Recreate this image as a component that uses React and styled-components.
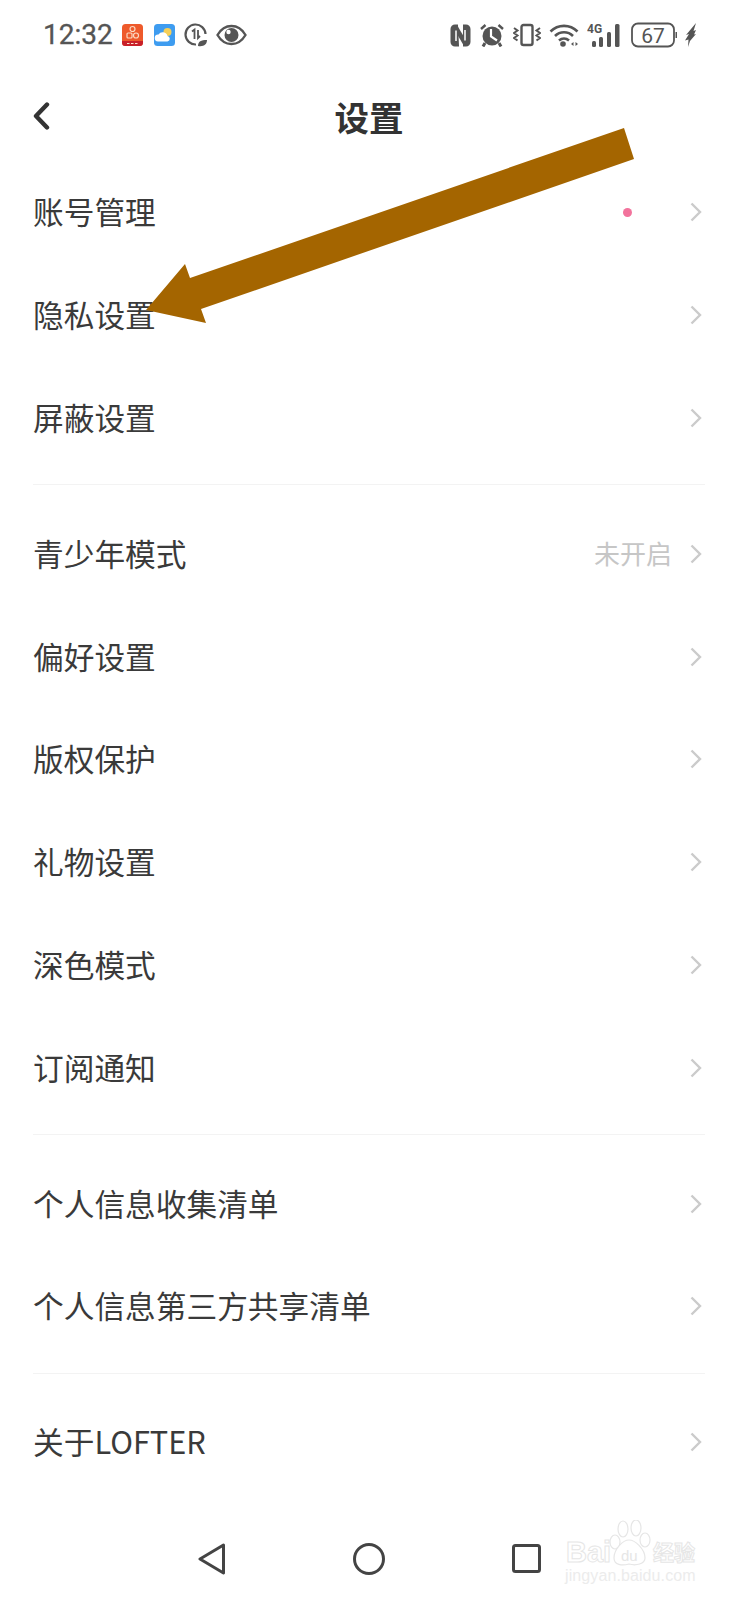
import React from "react";
import styled, { createGlobalStyle } from "styled-components";

const Global = createGlobalStyle`
  html, body { margin: 0; padding: 0; background: #fff; }
  * { box-sizing: border-box; }
`;

const Page = styled.div`
  position: relative;
  width: 738px;
  height: 1600px;
  overflow: hidden;
  background: #fff;
  color: #333;
  font-family: "Noto Sans CJK SC", "Noto Sans", sans-serif;
`;

const StatusBar = styled.div`
  height: 70px;
  padding: 0 42px 0 43px;
  display: flex;
  align-items: center;
  justify-content: space-between;
`;

const StatusGroup = styled.div`
  display: flex;
  align-items: center;
  gap: ${(p) => p.$gap}px;
`;

const Time = styled.span`
  font-family: Roboto, sans-serif;
  font-size: 28px;
  color: #555;
  line-height: 1;
  -webkit-text-stroke: 0.3px #555;
`;

const Header = styled.div`
  height: 91px;
  padding-left: 33px;
  display: flex;
  align-items: center;
  position: relative;
`;

const Title = styled.h1`
  position: absolute;
  left: 0;
  right: 0;
  margin: 0;
  text-align: center;
  font-size: 34.5px;
  font-weight: 700;
  color: #333;
`;

const Group = styled.div`
  padding: ${(p) => (p.$first ? 0 : 17)}px 0 15px;
  margin: 0 33px;
  border-bottom: ${(p) => (p.$last ? "none" : "1px solid #f3f3f3")};
`;

const Row = styled.div`
  height: 102.8px;
  display: flex;
  align-items: center;
`;

const Label = styled.span`
  flex: 1;
  font-size: 30.7px;
  font-weight: 400;
  color: #3a3a3a;
  padding-bottom: 3px;
`;

const Value = styled.span`
  font-size: 26px;
  color: #c6c6c6;
  margin-right: 18px;
  padding-bottom: 3px;
`;

const Dot = styled.span`
  width: 9px;
  height: 9px;
  border-radius: 50%;
  background: #f2739c;
  margin-right: 58px;
`;

const NavBar = styled.div`
  height: 100px;
  display: flex;
  align-items: center;
  justify-content: center;
  gap: 127px;
`;

const Arrow = styled.svg`
  position: absolute;
  left: 0;
  top: 0;
`;

const Watermark = styled.div`
  position: absolute;
  left: 564px;
  top: 1520px;
  width: 134px;
  height: 62px;
  color: #fff;
  font-family: "Liberation Sans", sans-serif;
`;

const MarkBai = styled.span`
  position: absolute;
  left: 2px;
  top: 18px;
  font-size: 29px;
  line-height: 1;
  font-weight: 700;
  -webkit-text-stroke: 1px #e6e6e6;
`;

const MarkDu = styled.span`
  position: absolute;
  left: 57px;
  top: 28px;
  font-size: 15px;
  line-height: 1;
  color: #e6e6e6;
`;

const MarkCn = styled.span`
  position: absolute;
  left: 89px;
  top: 21px;
  font-family: "Noto Sans CJK SC", sans-serif;
  font-size: 21px;
  line-height: 1;
  font-weight: 700;
  -webkit-text-stroke: 1px #e6e6e6;
`;

const MarkUrl = styled.span`
  position: absolute;
  left: 1px;
  top: 48px;
  font-size: 16px;
  line-height: 1;
  letter-spacing: 0.1px;
  color: #ececec;
`;

const RowChevron = styled.svg`
  margin-right: 3px;
`;

const Chevron = () => (
  <RowChevron width="12" height="20" viewBox="0 0 12 20" fill="none">
    <path d="M1.500 1.500 10 10 1.500 18.500" stroke="#cbcbcb" strokeWidth="2.400" />
  </RowChevron>
);

const BackIcon = () => (
  <svg width="17" height="28" viewBox="0 0 17 28" fill="none">
    <path d="M14 2.500 3 14l11 11.500" stroke="#333" strokeWidth="4.400" strokeLinecap="round" strokeLinejoin="round" />
  </svg>
);

const AppIcon = () => (
  <svg width="21" height="22" viewBox="0 0 21 22">
    <rect width="21" height="22" rx="3.500" fill="#ee5a2b" />
    <path d="M0 17h21v1.500a3.500 3.500 0 0 1-3.500 3.500h-14A3.500 3.500 0 0 1 0 18.500z" fill="#c8202a" />
    <g fill="none" stroke="#fbd9c2" strokeWidth="1.200">
      <circle cx="10.500" cy="5" r="2.500" />
      <rect x="5" y="9" width="5" height="5" rx="1" />
      <circle cx="14" cy="11.500" r="2.500" />
    </g>
    <path d="M5 19.500h11" stroke="#fbe3d0" strokeWidth="1.200" strokeDasharray="2.500 1.500" />
  </svg>
);

const WeatherIcon = () => (
  <svg width="23" height="22" viewBox="0 0 23 22">
    <rect x="2" width="21" height="22" rx="3.500" fill="#3e9cf0" />
    <circle cx="15.500" cy="8" r="4" fill="#f5cf58" />
    <path d="M6 17.500a3.500 3.500 0 0 1 .5-7 5 5 0 0 1 9 1.500 2.800 2.800 0 0 1 0 5.500z" fill="#fff" />
  </svg>
);

const LeafIcon = () => (
  <svg width="23" height="24" viewBox="0 0 23 24" fill="none">
    <path d="M12 21.500A10 10 0 1 1 21.500 11" stroke="#555" strokeWidth="2.200" />
    <path d="M8 8.500 10.500 6.500V16M14 7v8l2-2" stroke="#555" strokeWidth="1.800" />
    <path d="M14 23c0-4.500 3-6 9-6 0 4.500-3.500 7-9 6z" fill="#555" />
  </svg>
);

const EyeIcon = () => (
  <svg width="31" height="22" viewBox="0 0 31 22" fill="none">
    <path d="M1.500 11C5 5 10 2 15.500 2S26 5 29.500 11C26 17 21 20 15.500 20S5 17 1.500 11z" stroke="#555" strokeWidth="2.400" />
    <circle cx="15.500" cy="11" r="7" fill="#555" />
    <circle cx="12.500" cy="8" r="2.200" fill="#fff" />
  </svg>
);

const NfcIcon = () => (
  <svg width="21" height="23" viewBox="0 0 21 23" fill="none">
    <path d="M7 1.500H5A3.500 3.500 0 0 0 1.500 5v13A3.500 3.500 0 0 0 5 21.500h3zM14 1.500h2A3.500 3.500 0 0 1 19.500 5v13a3.500 3.500 0 0 1-3.500 3.500h-2z" fill="#555" stroke="#555" strokeWidth="2" />
    <path d="M5.500 3 15.500 20" stroke="#555" strokeWidth="4.500" />
    <path d="M6 6.500v10.500M15 6v10.500" stroke="#fff" strokeWidth="1.500" />
  </svg>
);

const AlarmIcon = () => (
  <svg width="26" height="24" viewBox="0 0 26 24" fill="none">
    <circle cx="13" cy="13" r="9.500" fill="#555" />
    <path d="M12 6v7.500l6 4" stroke="#fff" strokeWidth="2.200" />
    <path d="M2 6 6.500 2M24 6 19.500 2" stroke="#555" strokeWidth="2.400" />
    <path d="M6 20l-2 3.500M20 20l2 3.500" stroke="#555" strokeWidth="3" />
  </svg>
);

const VibrateIcon = () => (
  <svg width="28" height="24" viewBox="0 0 28 24" fill="none">
    <rect x="8.500" y="2" width="11" height="20" rx="2" stroke="#555" strokeWidth="2.400" />
    <path d="M1 5l3.500 2.500L1 10l3.500 2.500L1 15l3.500 2.500M27 5l-3.500 2.500L27 10l-3.500 2.500L27 15l-3.500 2.500" stroke="#555" strokeWidth="2" />
  </svg>
);

const WifiIcon = () => (
  <svg width="30" height="24" viewBox="0 0 30 24" fill="none">
    <path d="M1.500 8.500C9 1 21 1 28.500 8.500M6 13c5-5 13-5 18 0M10 17.500c3-2.500 7-2.500 10 0" stroke="#555" strokeWidth="2.600" />
    <circle cx="14" cy="21" r="2.800" fill="#555" />
    <path d="M22 21l2.500-2v4zM29 21l-2.500-2v4z" fill="#555" />
  </svg>
);

const SignalIcon = () => (
  <svg width="34" height="24" viewBox="0 0 34 24" fill="#555">
    <text x="0" y="10" fontFamily="Roboto, sans-serif" fontSize="12" fontWeight="700">4G</text>
    <rect x="5" y="18" width="4" height="6" rx="1.500" />
    <rect x="12" y="14" width="4" height="10" rx="1.500" />
    <rect x="20" y="9" width="4" height="15" rx="1.500" />
    <rect x="28" y="1" width="4.500" height="23" rx="1.500" />
  </svg>
);

const BatteryIcon = () => (
  <svg width="48" height="26" viewBox="0 0 48 26" fill="none">
    <rect x="3" y="1.500" width="42" height="23" rx="6" stroke="#555" strokeWidth="1.800" />
    <rect x="46.500" y="10" width="1.500" height="6" fill="#555" />
    <text x="24" y="21" textAnchor="middle" fontFamily="Roboto, sans-serif" fontSize="21" fill="#555">67</text>
  </svg>
);

const BoltIcon = () => (
  <svg width="11" height="24" viewBox="0 0 11 24">
    <path d="M11 0 8.500 8l2.500-1-2 4.500 2-.5-6 7L3 24l.5-7.500-3.500 1L4 11l-3 1z" fill="#555" />
  </svg>
);

const NavBack = () => (
  <svg width="28" height="32" viewBox="0 0 28 32" fill="none">
    <path d="M25.500 2 2 16l23.500 14z" stroke="#444" strokeWidth="3" strokeLinejoin="round" />
  </svg>
);

const NavHome = () => (
  <svg width="32" height="32" viewBox="0 0 32 32" fill="none">
    <circle cx="16" cy="16" r="14.500" stroke="#444" strokeWidth="3" />
  </svg>
);

const NavRecent = () => (
  <svg width="29" height="29" viewBox="0 0 29 29" fill="none">
    <rect x="1.500" y="1.500" width="26" height="26" rx="2" stroke="#444" strokeWidth="3" />
  </svg>
);

const PawMark = styled.svg`
  position: absolute;
  left: 44px;
  top: 0;
`;

const Paw = () => (
  <PawMark width="44" height="48" viewBox="0 0 44 48" fill="#fff" stroke="#e6e6e6" strokeWidth="1.200">
    <ellipse cx="15" cy="9" rx="5" ry="8" />
    <ellipse cx="28" cy="8" rx="5" ry="8" />
    <ellipse cx="7" cy="22" rx="5" ry="7" />
    <ellipse cx="37" cy="20" rx="5" ry="7" />
    <path d="M6 38c0-9 9-18 15-18s16 9 16 18c0 6-9 8-16 6-7 2-15 1-15-6z" />
  </PawMark>
);

const groups = [
  [{ label: "账号管理", dot: true }, { label: "隐私设置" }, { label: "屏蔽设置" }],
  [
    { label: "青少年模式", value: "未开启" },
    { label: "偏好设置" },
    { label: "版权保护" },
    { label: "礼物设置" },
    { label: "深色模式" },
    { label: "订阅通知" },
  ],
  [{ label: "个人信息收集清单" }, { label: "个人信息第三方共享清单" }],
  [{ label: "关于LOFTER" }],
];

export default function App() {
  return (
    <Page>
      <Global />
      <StatusBar>
        <StatusGroup $gap={9}>
          <Time>12:32</Time>
          <AppIcon />
          <WeatherIcon />
          <LeafIcon />
          <EyeIcon />
        </StatusGroup>
        <StatusGroup $gap={8}>
          <NfcIcon />
          <AlarmIcon />
          <VibrateIcon />
          <WifiIcon />
          <SignalIcon />
          <BatteryIcon />
          <BoltIcon />
        </StatusGroup>
      </StatusBar>

      <Header>
        <BackIcon />
        <Title>设置</Title>
      </Header>

      {groups.map((rows, i) => (
        <Group key={i} $first={i === 0} $last={i === groups.length - 1}>
          {rows.map((r) => (
            <Row key={r.label}>
              <Label>{r.label}</Label>
              {r.dot && <Dot />}
              {r.value && <Value>{r.value}</Value>}
              <Chevron />
            </Row>
          ))}
        </Group>
      ))}

      <NavBar>
        <NavBack />
        <NavHome />
        <NavRecent />
      </NavBar>

      <Arrow width="738" height="400" viewBox="0 0 738 400">
        <polygon points="624,128 634,159 201,309 206,323 146,310 185,264 190,278" fill="#a46500" />
      </Arrow>

      <Watermark>
        <Paw />
        <MarkBai>Bai</MarkBai>
        <MarkDu>du</MarkDu>
        <MarkCn>经验</MarkCn>
        <MarkUrl>jingyan.baidu.com</MarkUrl>
      </Watermark>
    </Page>
  );
}
